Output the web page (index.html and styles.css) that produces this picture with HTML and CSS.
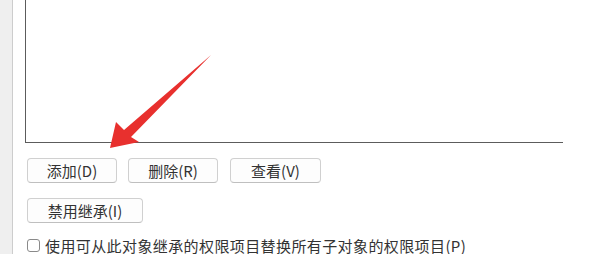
FILE: index.html
```html
<!DOCTYPE html>
<html>
<head>
  <meta charset="utf-8">
  <title>权限</title>
  <link rel="stylesheet" href="styles.css">
</head>
<body>
  <div class="page">
    <div class="rail"></div>
    <div class="panel">
      <div class="listbox"></div>

      <div class="actions">
        <button class="btn">添加(D)</button>
        <button class="btn">删除(R)</button>
        <button class="btn btn-view">查看(V)</button>
      </div>

      <div class="actions actions-second">
        <button class="btn btn-wide">禁用继承(I)</button>
      </div>

      <label class="check-row">
        <span class="check-box"></span>
        <span class="check-text">使用可从此对象继承的权限项目替换所有子对象的权限项目(P)</span>
      </label>
    </div>

    <!-- 标注箭头 -->
    <svg class="arrow" width="592" height="254" viewBox="0 0 592 254">
      <polygon points="110,148 116,122 124,130 211,55 131,137 139,142" fill="#e8302e"/>
    </svg>
  </div>
</body>
</html>
```

FILE: styles.css
```css
body {
    margin: 0;
    background-color: #fff;
    font-family: "Noto Sans CJK SC", "Microsoft YaHei", sans-serif;
    color: #333;
    overflow: hidden;
}
.page {
    position: relative;
    display: flex;
    height: 254px;
    width: 592px;
}
.rail {
    width: 12px;
    background-color: #efefef;
    border-right: 1px solid #cdcdcd;
}
.panel {
    flex: 1;
    padding-left: 12px;
}
.listbox {
    width: 537px;
    height: 142px;
    margin-top: -1px;
    border: 1px solid #5c5c5c;
    border-right: none;
}
.actions {
    display: flex;
    gap: 11px;
    margin-top: 15px;
    padding-left: 2px;
}
.actions-second {
    margin-top: 15px;
}
.btn {
    width: 90px;
    height: 25px;
    padding: 0;
    background-color: #fdfdfd;
    border: 1px solid #d0d0d0;
    border-bottom-color: #bfbfbf;
    border-radius: 4px;
    font-family: inherit;
    font-size: 15px;
    line-height: 23px;
    color: #333;
}
.btn-view {
    width: 91px;
    margin-left: 1px;
}
.btn-wide {
    width: 116px;
}
.check-row {
    display: flex;
    align-items: center;
    margin-top: 12px;
    padding-left: 2px;
    height: 20px;
}
.check-box {
    width: 11px;
    height: 11px;
    border: 1px solid #8a8a8a;
    border-radius: 3px;
    background-color: #fff;
    margin-right: 5px;
}
.check-text {
    font-size: 15px;
    letter-spacing: 0.4px;
    color: #333;
    white-space: nowrap;
}
.arrow {
    position: absolute;
    left: 0;
    top: 0;
    pointer-events: none;
}
```
